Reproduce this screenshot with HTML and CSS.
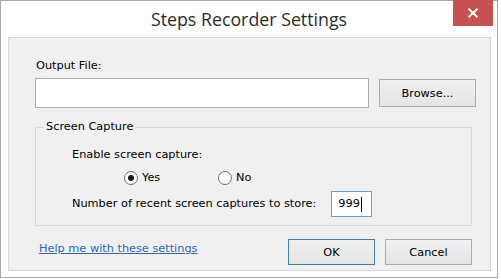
FILE: index.html
```html
<!DOCTYPE html>
<html>
<head>
<meta charset="utf-8">
<link rel="stylesheet" href="styles.css">
</head>
<body>
<div class="window">
  <div class="titlebar">
    <span class="spacer"></span>
    <span class="title">Steps Recorder Settings</span>
    <button class="close" aria-label="Close">
      <svg width="12" height="10" viewBox="0 0 12 10"><path d="M1.5 0.8 L10.5 9.2 M10.5 0.8 L1.5 9.2" stroke="#fff" stroke-width="2" fill="none"/></svg>
    </button>
  </div>
  <div class="client">
    <div class="label">Output File:</div>
    <div class="file-row">
      <div class="textbox file"></div>
      <button class="btn browse">Browse...</button>
    </div>
    <fieldset class="group">
      <legend>Screen Capture</legend>
      <div class="label">Enable screen capture:</div>
      <div class="radios">
        <span class="radio"><span class="circle on"></span>Yes</span>
        <span class="radio"><span class="circle"></span>No</span>
      </div>
      <div class="count-row">
        <span class="label">Number of recent screen captures to store:</span>
        <span class="textbox count">999<span class="caret"></span></span>
      </div>
    </fieldset>
    <div class="bottom-row">
      <a class="help" href="#">Help me with these settings</a>
      <div class="buttons">
        <button class="btn ok">OK</button>
        <button class="btn">Cancel</button>
      </div>
    </div>
  </div>
</div>
</body>
</html>
```
FILE: styles.css
```css
html, body {
  margin: 0;
  padding: 0;
  background: #ffffff;
}
body {
  font-family: "DejaVu Sans", Tahoma, sans-serif;
  font-size: 11.3px;
  color: #000;
}
.window {
  box-sizing: border-box;
  width: 498px;
  height: 278px;
  border: 1px solid #a8a8a8;
  background: #ffffff;
  display: flex;
  flex-direction: column;
}
.titlebar {
  height: 36px;
  display: grid;
  grid-template-columns: 1fr auto 1fr;
  align-items: start;
}
.title {
  font-family: "Open Sans", "Noto Sans", sans-serif;
  font-size: 17.8px;
  color: #2b2b2b;
  line-height: 24px;
  margin-top: 6px;
}
.close {
  justify-self: end;
  margin-right: 4px;
  margin-top: -1px;
  width: 40px;
  height: 26px;
  border: 0;
  padding: 0;
  background: #c75050;
  display: flex;
  align-items: center;
  justify-content: center;
}
.client {
  flex: 1;
  margin: 0 6px 6px 7px;
  border: 1px solid #d9d9d9;
  background: #f0f0f0;
  padding: 21px 0 0 26px;
  display: flex;
  flex-direction: column;
}
.label {
  line-height: 14px;
}
.client > .label {
  margin-left: 1px;
}
.file-row {
  margin-top: 5px;
  display: flex;
  align-items: center;
  gap: 10px;
}
.textbox {
  box-sizing: border-box;
  background: #fff;
  border: 1px solid #abadb3;
}
.file {
  width: 334px;
  height: 30px;
}
.btn {
  box-sizing: border-box;
  font-family: "DejaVu Sans", Tahoma, sans-serif;
  font-size: 11.3px;
  color: #000;
  height: 26px;
  width: 87px;
  padding: 0;
  border: 1px solid #acacac;
  background: linear-gradient(#f0f0f0, #e5e5e5);
}
.browse {
  width: 97px;
  height: 28px;
}
.group {
  margin: 12px 0 0 0;
  width: 437px;
  box-sizing: border-box;
  border: 1px solid #d8d8d8;
  padding: 14px 0 8px 36px;
}
.group legend {
  margin-left: -28px;
  padding: 0 2px;
  line-height: 14px;
}
.radios {
  margin-top: 9px;
  margin-left: 52px;
  display: flex;
  gap: 0;
}
.radio {
  display: flex;
  align-items: center;
  line-height: 14px;
  width: 94px;
}
.circle {
  box-sizing: border-box;
  width: 14px;
  height: 14px;
  border-radius: 50%;
  border: 1px solid #6e6e6e;
  background: #fff;
  margin-right: 4px;
  display: flex;
  align-items: center;
  justify-content: center;
}
.circle.on::after {
  content: "";
  width: 6px;
  height: 6px;
  border-radius: 50%;
  background: #1a1a1a;
}
.count-row {
  margin-top: 6px;
  display: flex;
  align-items: baseline;
  gap: 15px;
}
.count {
  width: 41px;
  height: 26px;
  border-color: #6e9fd6;
  padding-left: 6px;
  line-height: 24px;
  display: inline-flex;
  align-items: center;
}
.caret {
  display: inline-block;
  width: 1px;
  height: 15px;
  background: #000;
  margin-left: 1px;
}
.bottom-row {
  margin-top: 13px;
  display: flex;
  align-items: flex-start;
  justify-content: space-between;
  width: 437px;
}
.help {
  margin-left: 4px;
  margin-top: 3px;
  line-height: 14px;
  color: #2b69b1;
  text-decoration: underline;
}
.buttons {
  display: flex;
  gap: 10px;
}
.ok {
  border-color: #3c7fb1;
}
```
